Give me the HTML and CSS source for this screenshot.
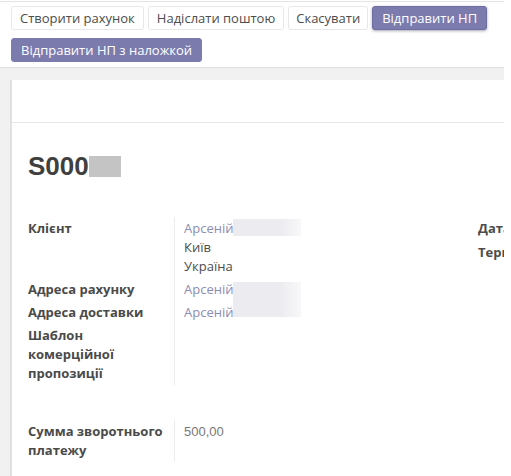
FILE: index.html
```html
<!DOCTYPE html>
<html lang="uk">
<head>
<meta charset="utf-8">
<title>S000</title>
<link rel="stylesheet" href="styles.css">
</head>
<body>
<div class="app">
  <div class="cp">
    <div class="btns">
      <button class="btn">Створити рахунок</button>
      <button class="btn">Надіслати поштою</button>
      <button class="btn narrow">Скасувати</button>
      <button class="btn primary focus">Відправити НП</button>
    </div>
    <div class="btns">
      <button class="btn primary">Відправити НП з наложкой</button>
    </div>
  </div>
  <div class="content">
    <div class="sheet">
      <div class="statusbar"></div>
      <div class="body">
        <h1 class="title">S000<span class="redact-title"></span></h1>
        <div class="groups">
          <div class="lgroup">
            <div class="fields">
              <div class="lbl">Клієнт</div>
              <div class="val">
                <div class="line"><span class="link">Арсеній</span><span class="redact r1"></span></div>
                <div class="line">Київ</div>
                <div class="line">Україна</div>
              </div>
              <div class="lbl">Адреса рахунку</div>
              <div class="val"><span class="link">Арсеній</span><span class="redact r2"></span></div>
              <div class="lbl">Адреса доставки</div>
              <div class="val"><span class="link">Арсеній</span></div>
              <div class="lbl">Шаблон комерційної пропозиції</div>
              <div class="val"></div>
            </div>
          </div>
          <div class="rgroup">
            <div class="rlbl">Дата замовлення</div>
            <div class="rlbl">Термін оплати</div>
          </div>
        </div>
        <div class="fields second">
          <div class="lbl">Сумма зворотнього платежу</div>
          <div class="val num">500,00</div>
        </div>
      </div>
    </div>
  </div>
</div>
</body>
</html>
```

FILE: styles.css
```css
* { box-sizing: border-box; }
html, body { margin: 0; padding: 0; background: #ffffff; }
body {
  font-family: "Open Sans", "Noto Sans", sans-serif;
  font-size: 13px;
  color: #4c4c4c;
  overflow: hidden;
}
.app {
  width: 504px;
  height: 476px;
  overflow: hidden;
}
.cp {
  margin-top: 1px;
  border-top: 1px solid #e4e4e4;
  border-bottom: 1px solid #dedede;
  padding: 4px 0 5px 11px;
  display: flex;
  flex-direction: column;
  gap: 8px;
  background: #fff;
}
.btns {
  display: flex;
  gap: 4px;
}
.btn {
  font-family: "Open Sans", "Noto Sans", sans-serif;
  font-size: 13px;
  height: 24px;
  padding: 0 8px;
  border: 1px solid #e8e8e8;
  background: #fff;
  color: #4c4c4c;
  border-radius: 3px;
  line-height: 22px;
  white-space: nowrap;
}
.btn.narrow { padding: 0 7px; }
.btn.primary {
  background: #7c7bad;
  border-color: #7c7bad;
  color: #fff;
  padding: 0 9px;
}
.btn.focus {
  box-shadow: 0 1px 3px rgba(60, 60, 90, 0.45);
  border-color: #6f6ea3;
}
.content {
  background: #f1f1f1;
  padding: 12px 0 0 10px;
  height: 410px;
}
.sheet {
  background: #fff;
  border-left: 2px solid #e0e0e0;
  height: 100%;
}
.statusbar {
  height: 43px;
  border-bottom: 1px solid #e6e6e6;
}
.body {
  padding-left: 16px;
  overflow: hidden;
}
.title {
  margin: 28px 0 0;
  font-family: "Liberation Sans", Arial, sans-serif;
  font-size: 26px;
  line-height: 30px;
  font-weight: bold;
  color: #3f3f3f;
  display: flex;
  align-items: flex-start;
}
.redact-title {
  display: inline-block;
  width: 32px;
  height: 21px;
  margin-top: 5px;
  background: #c4c4c4;
}
.groups {
  display: flex;
  margin-top: 36px;
  width: 560px;
}
.lgroup {
  width: 450px;
  flex: none;
}
.rgroup {
  flex: none;
  white-space: nowrap;
}
.rlbl {
  font-weight: bold;
  line-height: 19px;
  padding: 2px 0 2px;
  margin-bottom: 1px;
}
.fields {
  display: grid;
  grid-template-columns: 146px 1fr;
  line-height: 19px;
}
.lbl {
  font-weight: bold;
  padding: 2px 10px 2px 0;
  color: #4a4a4a;
}
.val {
  border-left: 1px solid #ececec;
  padding: 2px 0 2px 9px;
  color: #4c4c4c;
  position: relative;
}
.link { color: #8d8cb3; }
.redact {
  position: absolute;
  left: 58px;
  width: 68px;
  background: linear-gradient(90deg, #ececf0 0%, #ececf0 70%, #f8f8fa 100%);
}
.r1 { top: 2px; height: 17px; }
.r2 { top: 4px; height: 35px; }
.second {
  margin-top: 35px;
  width: 450px;
}
.num {
  font-family: "Liberation Sans", Arial, sans-serif;
  color: #777;
}
```
